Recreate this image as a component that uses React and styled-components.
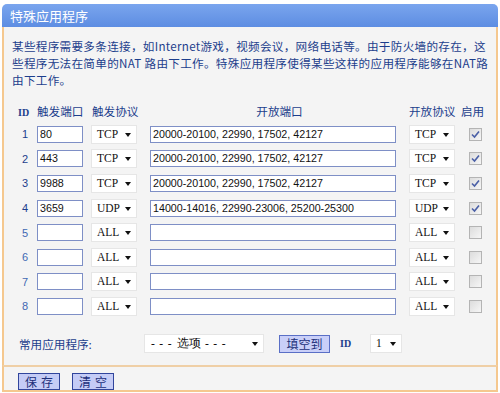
import styled, { createGlobalStyle } from "styled-components";

const GlobalStyle = createGlobalStyle`
  body {
    margin: 0;
    background: #ffffff;
    font-family: "Noto Sans CJK SC", "Liberation Sans", sans-serif;
  }
`;

const Page = styled.div`
  width: 496px;
  padding: 4px 2px 0;
`;

const TitleBar = styled.div`
  height: 23px;
  border-radius: 5px 5px 0 0;
  background: linear-gradient(#7aa5ee, #5d8de2);
  color: #ffffff;
  font-size: 13px;
  line-height: 23px;
  padding-left: 8px;
`;

const Body = styled.div`
  background: #f4f4f4;
  border-left: 2px solid #f5c88f;
  border-right: 2px solid #f5c88f;
  padding: 11px 8px 11px;
  color: #1c3e8c;
`;

const Intro = styled.p`
  margin: 0;
  font-size: 11.6px;
  line-height: 17px;
  letter-spacing: 0.3px;
  white-space: nowrap;
`;

const Table = styled.div`
  margin-top: 11px;
`;

const Row = styled.div`
  display: grid;
  grid-template-columns: 25px 54px 59px 259px 52px 30px;
  align-items: center;
  height: ${(p) => (p.$head ? "22px" : "24.6px")};
  font-size: 11.6px;
`;

const HeadCell = styled.div`
  padding-left: ${(p) => p.$pad || 0}px;
  text-align: ${(p) => (p.$center ? "center" : "left")};
`;

const IdHead = styled.span`
  font-family: "Liberation Serif", serif;
  font-size: 10px;
  font-weight: bold;
  padding-left: 6px;
`;

const Num = styled.div`
  padding-left: 10px;
  font-family: "Liberation Sans", sans-serif;
  font-size: 11px;
  color: ${(p) => (p.$light ? "#3f68b3" : "#1c3e8c")};
`;

const TextBox = styled.div`
  box-sizing: border-box;
  width: ${(p) => p.$w}px;
  height: 17px;
  border: 1px solid #7e8fc6;
  background: #ffffff;
  font-family: "Liberation Sans", sans-serif;
  font-size: 10.7px;
  line-height: 15px;
  padding-left: 2px;
  color: #111;
  white-space: nowrap;
  overflow: hidden;
`;

const Select = styled.div`
  box-sizing: border-box;
  position: relative;
  width: ${(p) => p.$w}px;
  height: 19px;
  border: 1px solid #e6e6e6;
  background: #ffffff;
  font-family: "Liberation Serif", serif;
  font-size: 11.5px;
  line-height: 17px;
  padding-left: 5px;
  color: #111;
  white-space: nowrap;
  &::after {
    content: "";
    position: absolute;
    right: 5px;
    top: 7px;
    border-left: 3.5px solid transparent;
    border-right: 3.5px solid transparent;
    border-top: 4px solid #111;
  }
`;

const Dashes = styled.span`
  letter-spacing: 4.5px;
  margin: 0 ${(p) => p.$gap}px;
`;

const Check = styled.div`
  box-sizing: border-box;
  width: 13px;
  height: 13px;
  margin-left: 8px;
  border: 1px solid #b4b4b4;
  background: linear-gradient(135deg, #dcdcdc, #f6f6f6);
  display: flex;
  align-items: center;
  justify-content: center;
`;

const Common = styled.div`
  display: flex;
  align-items: center;
  height: 20px;
  margin-top: 15px;
  font-size: 11.6px;
`;

const CommonLabel = styled.span`
  margin-left: 7px;
  width: 125px;
`;

const FillButton = styled.div`
  box-sizing: border-box;
  height: 18px;
  width: 51px;
  margin-left: 15px;
  border: 1px solid #5a6fc6;
  background: #c9cff8;
  color: #1c2f7a;
  font-size: 12px;
  line-height: 16px;
  text-align: center;
`;

const IdLabel = styled.span`
  margin-left: 10px;
  width: 30px;
  font-family: "Liberation Serif", serif;
  font-size: 10px;
  font-weight: bold;
`;

const Footer = styled.div`
  background: #f4f4f4;
  border: 2px solid #f5c88f;
  border-top-color: #efcfa6;
  padding: 6px 0 0 14px;
  height: 17px;
  display: flex;
  gap: 12px;
`;

const Button = styled.div`
  box-sizing: border-box;
  width: 42px;
  height: 17px;
  border: 1px solid #31459c;
  background: #c5ccf6;
  color: #1c2f7a;
  font-size: 12px;
  line-height: 15px;
  text-align: center;
  letter-spacing: 4px;
  padding-left: 4px;
`;

const rows = [
  { id: 1, port: "80", proto: "TCP", open: "20000-20100, 22990, 17502, 42127", oproto: "TCP", on: true },
  { id: 2, port: "443", proto: "TCP", open: "20000-20100, 22990, 17502, 42127", oproto: "TCP", on: true },
  { id: 3, port: "9988", proto: "TCP", open: "20000-20100, 22990, 17502, 42127", oproto: "TCP", on: true },
  { id: 4, port: "3659", proto: "UDP", open: "14000-14016, 22990-23006, 25200-25300", oproto: "UDP", on: true },
  { id: 5, port: "", proto: "ALL", open: "", oproto: "ALL", on: false },
  { id: 6, port: "", proto: "ALL", open: "", oproto: "ALL", on: false },
  { id: 7, port: "", proto: "ALL", open: "", oproto: "ALL", on: false },
  { id: 8, port: "", proto: "ALL", open: "", oproto: "ALL", on: false },
];

const Tick = () => (
  <svg width="9" height="9" viewBox="0 0 9 9">
    <path d="M1 4.5 L3.5 7 L8 1.5" fill="none" stroke="#4a5fa6" strokeWidth="1.6" />
  </svg>
);

const App = () => {
  return (
    <Page>
      <GlobalStyle />
      <TitleBar>特殊应用程序</TitleBar>
      <Body>
        <Intro>
          某些程序需要多条连接，如Internet游戏，视频会议，网络电话等。由于防火墙的存在，这
          <br />
          些程序无法在简单的NAT 路由下工作。特殊应用程序使得某些这样的应用程序能够在NAT路
          <br />
          由下工作。
        </Intro>

        <Table>
          <Row $head>
            <HeadCell><IdHead>ID</IdHead></HeadCell>
            <HeadCell>触发端口</HeadCell>
            <HeadCell $pad={1}>触发协议</HeadCell>
            <HeadCell $center>开放端口</HeadCell>
            <HeadCell>开放协议</HeadCell>
            <HeadCell>启用</HeadCell>
          </Row>
          {rows.map((r) => (
            <Row key={r.id}>
              <Num $light={r.id > 4}>{r.id}</Num>
              <TextBox $w={46}>{r.port}</TextBox>
              <Select $w={46}>{r.proto}</Select>
              <TextBox $w={246}>{r.open}</TextBox>
              <Select $w={46}>{r.oproto}</Select>
              <Check>{r.on && <Tick />}</Check>
            </Row>
          ))}
        </Table>

        <Common>
          <CommonLabel>常用应用程序:</CommonLabel>
          <Select $w={120}>
            <Dashes $gap={1}>---</Dashes>选项<Dashes $gap={4}>---</Dashes>
          </Select>
          <FillButton>填空到</FillButton>
          <IdLabel>ID</IdLabel>
          <Select $w={32}>1</Select>
        </Common>
      </Body>
      <Footer>
        <Button>保存</Button>
        <Button>清空</Button>
      </Footer>
    </Page>
  );
};

export default App;
